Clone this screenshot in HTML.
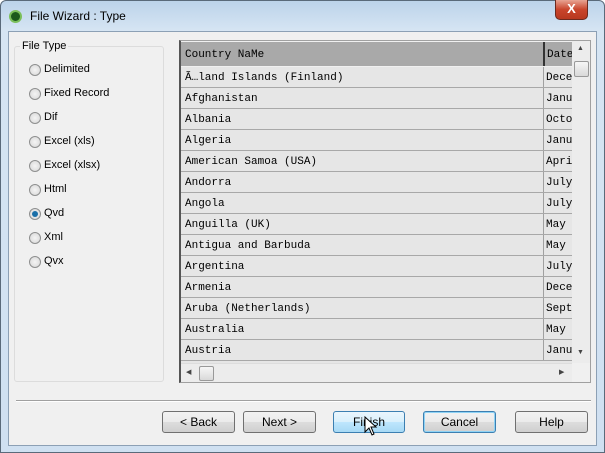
<!DOCTYPE html>
<html><head><style>
*{margin:0;padding:0;box-sizing:border-box}
body{width:605px;height:453px;overflow:hidden;background:#fff;font-family:"Liberation Sans",sans-serif;font-size:12px;color:#000;position:relative}
.frame{position:absolute;left:0;top:0;width:605px;height:453px;border-radius:6px 6px 0 0;background:linear-gradient(#bcd3ea,#d6e5f3 30px,#cfe0f1);border:1px solid #5a6a7a}
.title{position:absolute;left:30px;top:9px;font-size:12px;color:#000}
.icon{position:absolute;left:9px;top:10px;width:13px;height:13px;border-radius:50%;background:#1c5a1c;border:2px solid #7bbf5a}
.close{position:absolute;left:555px;top:0;width:33px;height:20px;background:linear-gradient(#e8a493,#c9452c 50%,#b8381f);border:1px solid #6b2a1f;border-top:none;border-radius:0 0 5px 5px;color:#fff;font-weight:bold;text-align:center;font-size:13px;line-height:18px}
.client{position:absolute;left:8px;top:31px;width:589px;height:415px;background:#f0f0f0;border:1px solid #8ca0b5}
.group{position:absolute;left:14px;top:46px;width:150px;height:336px;border:1px solid #dcdcdc;border-radius:3px}
.glabel{position:absolute;left:20px;top:40px;background:#f0f0f0;padding:0 2px;font-size:11px}
.radio{position:absolute;left:29px;font-size:11px}
.radio i{position:absolute;left:0;top:1px;width:12px;height:12px;border-radius:50%;border:1px solid #8e8f8f;background:radial-gradient(#f4f4f4,#d6d6d6)}
.radio i.on::after{content:"";position:absolute;left:2px;top:2px;width:6px;height:6px;border-radius:50%;background:#1a6fa8}
.radio span{position:absolute;left:15px;top:0;white-space:nowrap}
.table{position:absolute;left:179px;top:40px;width:412px;height:343px;border:1px solid #a0a0a0;border-left:2px solid #555;background:#f0f0f0;overflow:hidden}
.hdr{position:absolute;left:0;top:1px;width:391px;height:24px;background:#a9a9a9;font-family:"Liberation Mono",monospace;font-size:11px;line-height:26px}
.row{position:absolute;left:0;width:391px;height:21px;background:#e6e6e6;border-bottom:1px solid #a8a8a8;font-family:"Liberation Mono",monospace;font-size:11px;line-height:22px}
.c1{position:absolute;left:4px}
.c2{position:absolute;left:362px;top:0;width:30px;height:100%;border-left:1px solid #a0a0a0;padding-left:2px;overflow:hidden;white-space:nowrap}
.hdr .c2{border-left:2px solid #333}
.vs{position:absolute;left:391px;top:0;width:19px;height:322px;background:#ececec}
.hs{position:absolute;left:0;top:322px;width:391px;height:19px;background:#ececec;border-top:1px solid #ddd}
.thumb{position:absolute;width:15px;height:15px;border:1px solid #999;border-radius:2px;background:linear-gradient(#f6f6f6,#d9d9d9)}
.sep{position:absolute;left:16px;top:400px;width:575px;height:2px;border-top:1px solid #a0a0a0;border-bottom:1px solid #fff}
.btn{position:absolute;top:411px;height:22px;border:1px solid #707070;border-radius:3px;background:linear-gradient(#f2f2f2,#ebebeb 50%,#dddddd 51%,#cfcfcf);text-align:center;line-height:20px;font-size:12px}
.btn.hot{background:linear-gradient(#eaf6fd,#d9f0fc 50%,#bee6fd 51%,#a7d9f5);border-color:#3c7fb1}
.btn.def{border-color:#3c7fb1;box-shadow:inset 0 0 0 1px #8fd3f5}
</style></head><body>
<div class="frame"></div>
<div class="icon"></div>
<div class="title">File Wizard : Type</div>
<div class="close">X</div>
<div class="client"></div>
<div class="group"></div>
<div class="glabel">File Type</div>
<div class="radio" style="top:63px"><i></i><span>Delimited</span></div>
<div class="radio" style="top:87px"><i></i><span>Fixed Record</span></div>
<div class="radio" style="top:111px"><i></i><span>Dif</span></div>
<div class="radio" style="top:135px"><i></i><span>Excel (xls)</span></div>
<div class="radio" style="top:159px"><i></i><span>Excel (xlsx)</span></div>
<div class="radio" style="top:183px"><i></i><span>Html</span></div>
<div class="radio" style="top:207px"><i class="on"></i><span>Qvd</span></div>
<div class="radio" style="top:231px"><i></i><span>Xml</span></div>
<div class="radio" style="top:255px"><i></i><span>Qvx</span></div>
<div class="table">
<div class="hdr"><span class="c1">Country NaMe</span><span class="c2">Date</span></div>
<div class="row" style="top:26px"><span class="c1">Ã…land Islands (Finland)</span><span class="c2">December</span></div>
<div class="row" style="top:47px"><span class="c1">Afghanistan</span><span class="c2">January</span></div>
<div class="row" style="top:68px"><span class="c1">Albania</span><span class="c2">October</span></div>
<div class="row" style="top:89px"><span class="c1">Algeria</span><span class="c2">January</span></div>
<div class="row" style="top:110px"><span class="c1">American Samoa (USA)</span><span class="c2">April</span></div>
<div class="row" style="top:131px"><span class="c1">Andorra</span><span class="c2">July</span></div>
<div class="row" style="top:152px"><span class="c1">Angola</span><span class="c2">July</span></div>
<div class="row" style="top:173px"><span class="c1">Anguilla (UK)</span><span class="c2">May</span></div>
<div class="row" style="top:194px"><span class="c1">Antigua and Barbuda</span><span class="c2">May</span></div>
<div class="row" style="top:215px"><span class="c1">Argentina</span><span class="c2">July</span></div>
<div class="row" style="top:236px"><span class="c1">Armenia</span><span class="c2">December</span></div>
<div class="row" style="top:257px"><span class="c1">Aruba (Netherlands)</span><span class="c2">September</span></div>
<div class="row" style="top:278px"><span class="c1">Australia</span><span class="c2">May</span></div>
<div class="row" style="top:299px"><span class="c1">Austria</span><span class="c2">January</span></div>
<div class="row" style="top:320px;height:3px"></div>
<div class="vs"><div style="position:absolute;left:5px;top:4px;font-size:7px;color:#444">▲</div><div class="thumb" style="left:2px;top:20px;height:16px"></div><div style="position:absolute;left:5px;top:308px;font-size:7px;color:#444">▼</div></div>
<div class="hs"><div style="position:absolute;left:5px;top:4px;font-size:7px;color:#444">◀</div><div class="thumb" style="left:18px;top:2px"></div><div style="position:absolute;left:378px;top:4px;font-size:7px;color:#444">▶</div></div>
</div>
<div class="sep"></div>
<div class="btn" style="left:162px;width:73px">&lt; Back</div>
<div class="btn" style="left:243px;width:73px">Next &gt;</div>
<div class="btn hot" style="left:333px;width:72px">Finish</div>
<div class="btn def" style="left:423px;width:73px">Cancel</div>
<div class="btn" style="left:515px;width:73px">Help</div>
<svg style="position:absolute;left:364px;top:416px" width="14" height="21" viewBox="0 0 14 21"><path d="M1 1 L1 16 L5 12 L8 19 L10 18 L7 11 L12 11 Z" fill="#fff" stroke="#000" stroke-width="1"/></svg>
</body></html>
